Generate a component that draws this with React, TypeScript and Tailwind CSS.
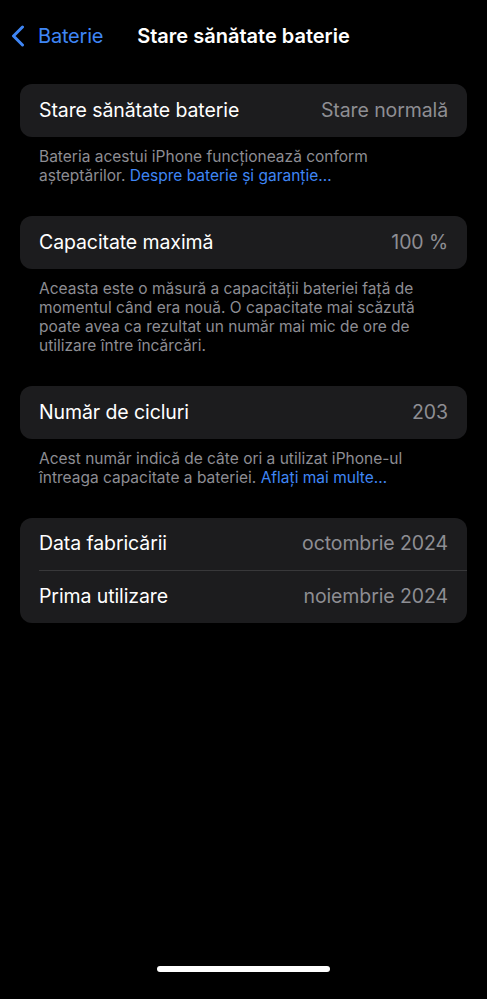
import React from "react";

type Row = { label: string; value: string };

function Card({ rows }: { rows: Row[] }) {
  const single = rows.length === 1;
  return (
    <div className="bg-[#1c1c1e] rounded-[12px] overflow-hidden">
      {rows.map((row, i) => (
        <div key={row.label}>
          {i > 0 && <div className="ml-[19px] h-px bg-[#38383a]" />}
          <div
            className={`${single ? "h-[53px]" : "h-[52px]"} px-[19px] flex items-center justify-between text-[19.5px] tracking-[-0.1px]`}
          >
            <span className="text-white">{row.label}</span>
            <span className="text-[#8e8e93]">{row.value}</span>
          </div>
        </div>
      ))}
    </div>
  );
}

function Footer({ children }: { children: React.ReactNode }) {
  return (
    <p className="px-[19px] pt-[10px] pb-[31px] text-[15.5px] leading-[19px] text-[#8d8d93]">
      {children}
    </p>
  );
}

function Link({ children }: { children: React.ReactNode }) {
  return <span className="text-[#3f86f5]">{children}</span>;
}

export default function App() {
  return (
    <div className="w-full h-[999px] bg-black flex flex-col font-['Inter','Liberation_Sans',sans-serif] antialiased">
      <header className="h-[72px] grid grid-cols-[1fr_auto_1fr] items-center">
        <button className="flex items-center gap-[13px] pl-[11px] text-[#3f86f5] text-[20px] tracking-[-0.2px]">
          <svg width="14" height="22" viewBox="0 0 14 22" fill="none">
            <polyline
              points="11.5,2 2.5,11 11.5,20"
              stroke="#3f86f5"
              strokeWidth="3"
              strokeLinecap="round"
              strokeLinejoin="round"
            />
          </svg>
          <span>Baterie</span>
        </button>
        <h1 className="text-white text-[20px] font-semibold">
          Stare sănătate baterie
        </h1>
        <div />
      </header>

      <main className="px-[20px] pt-[12px] flex-1">
        <Card rows={[{ label: "Stare sănătate baterie", value: "Stare normală" }]} />
        <Footer>
          Bateria acestui iPhone funcționează conform
          <br />
          așteptărilor. <Link>Despre baterie și garanție…</Link>
        </Footer>

        <Card rows={[{ label: "Capacitate maximă", value: "100 %" }]} />
        <Footer>
          Aceasta este o măsură a capacității bateriei față de
          <br />
          momentul când era nouă. O capacitate mai scăzută
          <br />
          poate avea ca rezultat un număr mai mic de ore de
          <br />
          utilizare între încărcări.
        </Footer>

        <Card rows={[{ label: "Număr de cicluri", value: "203" }]} />
        <Footer>
          Acest număr indică de câte ori a utilizat iPhone-ul
          <br />
          întreaga capacitate a bateriei. <Link>Aflați mai multe…</Link>
        </Footer>

        <Card
          rows={[
            { label: "Data fabricării", value: "octombrie 2024" },
            { label: "Prima utilizare", value: "noiembrie 2024" },
          ]}
        />
      </main>

      <div className="h-[33px] flex justify-center">
        <div className="w-[173px] h-[6px] rounded-full bg-white" />
      </div>
    </div>
  );
}
